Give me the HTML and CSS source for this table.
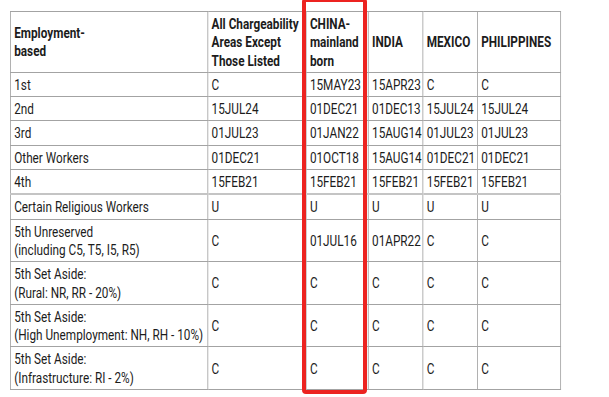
FILE: index.html
```html
<!DOCTYPE html>
<html lang="en">
<head>
<meta charset="utf-8">
<title>Employment-based dates</title>
<link rel="stylesheet" href="styles.css">
</head>
<body>
<div class="page">
  <div class="scaler">
    <table class="dates">
      <colgroup>
        <col class="c-cat"><col class="c-all"><col class="c-china"><col class="c-india"><col class="c-mexico"><col class="c-phil">
      </colgroup>
      <thead>
        <tr>
          <th>Employment-<br>based</th>
          <th>All Chargeability Areas Except Those Listed</th>
          <th>CHINA-<br>mainland born</th>
          <th>INDIA</th>
          <th>MEXICO</th>
          <th>PHILIPPINES</th>
        </tr>
      </thead>
      <tbody>
        <tr><td>1st</td><td>C</td><td>15MAY23</td><td>15APR23</td><td>C</td><td>C</td></tr>
        <tr><td>2nd</td><td>15JUL24</td><td>01DEC21</td><td>01DEC13</td><td>15JUL24</td><td>15JUL24</td></tr>
        <tr><td>3rd</td><td>01JUL23</td><td>01JAN22</td><td>15AUG14</td><td>01JUL23</td><td>01JUL23</td></tr>
        <tr><td>Other Workers</td><td>01DEC21</td><td>01OCT18</td><td>15AUG14</td><td>01DEC21</td><td>01DEC21</td></tr>
        <tr><td>4th</td><td>15FEB21</td><td>15FEB21</td><td>15FEB21</td><td>15FEB21</td><td>15FEB21</td></tr>
        <tr class="sep"><td>Certain Religious Workers</td><td>U</td><td>U</td><td>U</td><td>U</td><td>U</td></tr>
        <tr><td>5th Unreserved<br>(including C5, T5, I5, R5)</td><td>C</td><td>01JUL16</td><td>01APR22</td><td>C</td><td>C</td></tr>
        <tr><td>5th Set Aside:<br>(Rural: NR, RR - 20%)</td><td>C</td><td>C</td><td>C</td><td>C</td><td>C</td></tr>
        <tr><td>5th Set Aside:<br>(High Unemployment: NH, RH - 10%)</td><td>C</td><td>C</td><td>C</td><td>C</td><td>C</td></tr>
        <tr><td>5th Set Aside:<br>(Infrastructure: RI - 2%)</td><td>C</td><td>C</td><td>C</td><td>C</td><td>C</td></tr>
      </tbody>
    </table>
  </div>
  <div class="highlight"></div>
</div>
</body>
</html>
```

FILE: styles.css
```css
html, body {
  margin: 0;
  padding: 0;
  background: #ffffff;
  overflow: hidden;
}

.page {
  position: relative;
  width: 609px;
  height: 397px;
  padding: 11px 0 0 10px;
  box-sizing: border-box;
}

.scaler {
  transform: scaleX(0.84);
  transform-origin: left top;
  width: 655px;
}

.dates {
  border-collapse: collapse;
  table-layout: fixed;
  width: 655px;
  font-family: Roboto, "Noto Sans", sans-serif;
  font-size: 14px;
  line-height: 18.3px;
  color: #1c1c1c;
}

.c-cat { width: 235px; }
.c-all { width: 117px; }
.c-china { width: 74px; }
.c-india { width: 65px; }
.c-mexico { width: 65px; }
.c-phil { width: 99px; }

.dates th,
.dates td {
  border: 1px solid #a3a3a3;
  padding: 3px 3px 2px 4px;
  text-align: left;
  vertical-align: middle;
  white-space: normal;
}

.dates th {
  font-weight: 700;
}

.dates tr.sep td {
  border-top: 2px solid #c4c4c4;
}

.highlight {
  position: absolute;
  left: 302px;
  top: -2px;
  width: 65px;
  height: 396px;
  box-sizing: border-box;
  border: 4px solid #ec2320;
  border-radius: 4px;
  pointer-events: none;
}
```
